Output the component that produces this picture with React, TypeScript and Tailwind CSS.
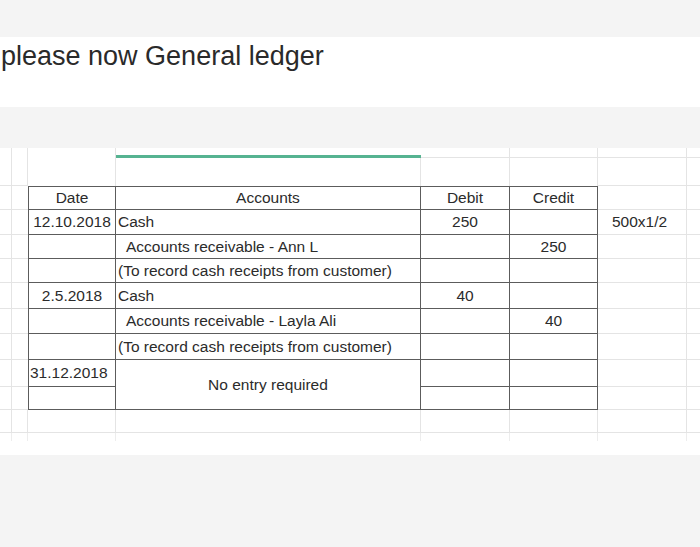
import React from "react";

type Line = {
  date?: string;
  acc?: string;
  indent?: boolean;
  debit?: string;
  credit?: string;
  note?: string;
  h: string;
};

const lines: Line[] = [
  { date: "12.10.2018", acc: "Cash", debit: "250", note: "500x1/2", h: "h-[25px]" },
  { acc: "Accounts receivable - Ann L", indent: true, credit: "250", h: "h-[24px]" },
  { acc: "(To record cash receipts from customer)", h: "h-[24px]" },
  { date: "2.5.2018", acc: "Cash", debit: "40", h: "h-[26px]" },
  { acc: "Accounts receivable - Layla Ali", indent: true, credit: "40", h: "h-[25px]" },
  { acc: "(To record cash receipts from customer)", h: "h-[26px]" },
];

// faint spreadsheet cells outside the ledger
const c0 = "w-[12px] shrink-0 border-r border-b border-[#e4e4e4]";
const c1 = "w-[16px] shrink-0 border-b border-[#e4e4e4]";
const c1Open = "w-[16px] shrink-0 border-r border-b border-[#e4e4e4]";
const c6 = "w-[89px] shrink-0 border-r border-b border-[#e4e4e4]";
const c7 = "flex-1 border-b border-[#e4e4e4]";

const cell = "flex items-center border-r border-b border-[#5c5c5c] shrink-0";

export default function App() {
  return (
    <div
      className="w-[700px] h-[547px] flex flex-col bg-[#f4f4f4] text-[#2b2b2b]"
      style={{ fontFamily: '"Liberation Sans", Arial, sans-serif' }}
    >
      <div className="h-[37px] shrink-0" />
      <div className="h-[70px] shrink-0 bg-white">
        <h1 className="pt-[6px] pl-px text-[27px] leading-[27px] text-[#2a2a2a]">
          please now General ledger
        </h1>
      </div>
      <div className="h-[41px] shrink-0" />

      <div className="h-[307px] shrink-0 bg-white text-[15.5px]">
        {/* green selection bar row */}
        <div className="flex h-[10px]">
          <div className="w-[12px] border-r border-[#e4e4e4]" />
          <div className="w-[16px] border-r border-[#e4e4e4]" />
          <div className="w-[88px] border-r border-[#e4e4e4]" />
          <div className="w-[305px] border-b-[3px] border-[#56b391]" />
          <div className="w-[89px] border-r border-b border-[#e4e4e4]" />
          <div className="w-[88px] border-r border-b border-[#e4e4e4]" />
          <div className={c6} />
          <div className={c7} />
        </div>
        <div className="flex h-[28px]">
          <div className={c0} />
          <div className="w-[16px] border-r border-b border-[#e4e4e4]" />
          <div className="w-[88px] border-r border-[#e4e4e4]" />
          <div className="w-[305px] border-r border-[#e4e4e4]" />
          <div className="w-[89px] border-r border-[#e4e4e4]" />
          <div className="w-[88px] border-r border-[#e4e4e4]" />
          <div className={c6} />
          <div className={c7} />
        </div>

        {/* header */}
        <div className="flex h-[24px]">
          <div className={c0} />
          <div className={c1} />
          <div className={`${cell} w-[88px] border-l border-t justify-center`}>Date</div>
          <div className={`${cell} w-[305px] border-t justify-center`}>Accounts</div>
          <div className={`${cell} w-[89px] border-t justify-center`}>Debit</div>
          <div className={`${cell} w-[88px] border-t justify-center`}>Credit</div>
          <div className={c6} />
          <div className={c7} />
        </div>

        {lines.map((l, i) => (
          <div key={i} className={`flex ${l.h}`}>
            <div className={c0} />
            <div className={c1} />
            <div className={`${cell} w-[88px] border-l justify-center`}>{l.date}</div>
            <div className={`${cell} w-[305px] ${l.indent ? "pl-[10px]" : "pl-[2px]"}`}>
              {l.acc}
            </div>
            <div className={`${cell} w-[89px] justify-center`}>{l.debit}</div>
            <div className={`${cell} w-[88px] justify-center`}>{l.credit}</div>
            <div className={`${c6} flex items-center pl-[14px]`}>{l.note}</div>
            <div className={c7} />
          </div>
        ))}

        {/* merged final entry */}
        <div className="flex h-[50px]">
          <div className="w-[12px] flex flex-col">
            <div className="h-[27px] border-r border-b border-[#e4e4e4]" />
            <div className="flex-1 border-r border-b border-[#e4e4e4]" />
          </div>
          <div className="w-[16px] flex flex-col">
            <div className="h-[27px] border-b border-[#e4e4e4]" />
            <div className="flex-1 border-b border-[#e4e4e4]" />
          </div>
          <div className="w-[88px] flex flex-col border-l border-r border-[#5c5c5c]">
            <div className="h-[27px] flex items-center pl-[1px] border-b border-[#5c5c5c]">
              31.12.2018
            </div>
            <div className="flex-1 border-b border-[#5c5c5c]" />
          </div>
          <div className={`${cell} w-[305px] justify-center`}>No entry required</div>
          <div className="w-[89px] flex flex-col border-r border-[#5c5c5c]">
            <div className="h-[27px] border-b border-[#5c5c5c]" />
            <div className="flex-1 border-b border-[#5c5c5c]" />
          </div>
          <div className="w-[88px] flex flex-col border-r border-[#5c5c5c]">
            <div className="h-[27px] border-b border-[#5c5c5c]" />
            <div className="flex-1 border-b border-[#5c5c5c]" />
          </div>
          <div className="w-[89px] flex flex-col">
            <div className="h-[27px] border-r border-b border-[#e4e4e4]" />
            <div className="flex-1 border-r border-b border-[#e4e4e4]" />
          </div>
          <div className="flex-1 flex flex-col">
            <div className="h-[27px] border-b border-[#e4e4e4]" />
            <div className="flex-1 border-b border-[#e4e4e4]" />
          </div>
        </div>

        {/* empty rows below */}
        <div className="flex h-[23px]">
          <div className={c0} />
          <div className={c1Open} />
          <div className="w-[88px] border-r border-b border-[#e4e4e4]" />
          <div className="w-[305px] border-r border-b border-[#e4e4e4]" />
          <div className="w-[89px] border-r border-b border-[#e4e4e4]" />
          <div className="w-[88px] border-r border-b border-[#e4e4e4]" />
          <div className={c6} />
          <div className={c7} />
        </div>
        <div className="flex h-[8px]">
          <div className="w-[12px] border-r border-[#ededed]" />
          <div className="w-[16px] border-r border-[#ededed]" />
          <div className="w-[88px] border-r border-[#ededed]" />
          <div className="w-[305px] border-r border-[#ededed]" />
          <div className="w-[89px] border-r border-[#ededed]" />
          <div className="w-[88px] border-r border-[#ededed]" />
          <div className="w-[89px] border-r border-[#ededed]" />
        </div>
      </div>

      <div className="flex-1" />
    </div>
  );
}
